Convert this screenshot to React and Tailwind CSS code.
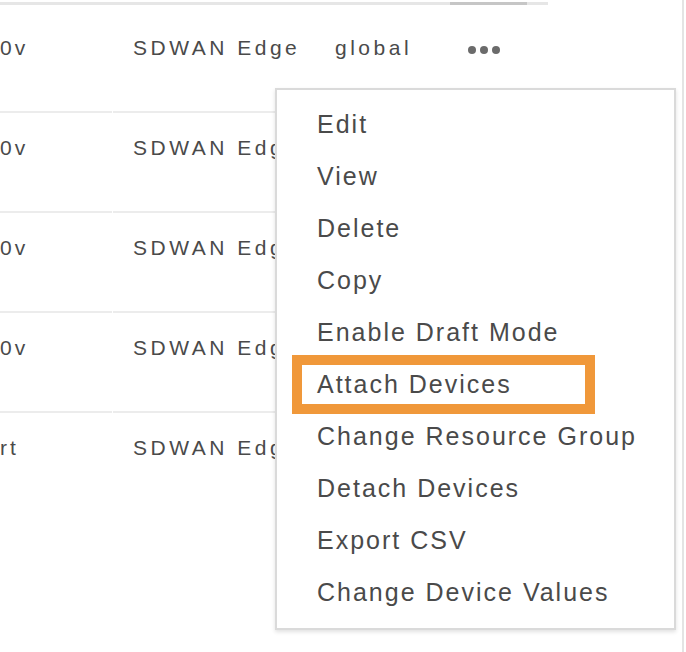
import React from "react";

const rows = [
  { c1: "0v", c2: "SDWAN Edge", c3: "global", dots: true },
  { c1: "0v", c2: "SDWAN Edge", c3: "", dots: false },
  { c1: "0v", c2: "SDWAN Edge", c3: "", dots: false },
  { c1: "0v", c2: "SDWAN Edge", c3: "", dots: false },
  { c1: "rt", c2: "SDWAN Edge", c3: "", dots: false, last: true },
];

const items = [
  "Edit",
  "View",
  "Delete",
  "Copy",
  "Enable Draft Mode",
  "Attach Devices",
  "Change Resource Group",
  "Detach Devices",
  "Export CSV",
  "Change Device Values",
];

export default function App() {
  return (
    <div
      className="relative flex w-[686px] h-[652px] overflow-hidden bg-white text-[#4a4a4a]"
      style={{ fontFamily: '"Liberation Sans", Arial, sans-serif' }}
    >
      <div className="w-[682px] h-full flex flex-col">
        <div className="mt-[2px] h-[3px] w-[548px] bg-[#e6e6e6] flex">
          <div className="ml-[450px] w-[77px] h-full bg-[#c6c6c6]" />
        </div>
        <div className="mt-[8px] flex flex-col">
          {rows.map((r, i) => (
            <div key={i} className="flex h-[100px]">
              <div
                className={`w-[112px] pt-[23px] text-[21px] leading-[24px] tracking-[3px] whitespace-nowrap ${
                  r.last ? "" : "border-b-2 border-[#ececec]"
                }`}
              >
                {r.c1}
              </div>
              <div
                className={`ml-[1px] w-[435px] flex pt-[23px] text-[21px] leading-[24px] tracking-[3.5px] whitespace-nowrap ${
                  r.last ? "" : "border-b-2 border-[#ececec]"
                }`}
              >
                <div className="w-[222px] pl-[20px]">{r.c2}</div>
                <div className="w-[133px]">{r.c3}</div>
                <div className="pt-[10px] flex gap-[4px]">
                  {r.dots && (
                    <>
                      <span className="block w-[8px] h-[8px] rounded-full bg-[#6b6b6b]" />
                      <span className="block w-[8px] h-[8px] rounded-full bg-[#6b6b6b]" />
                      <span className="block w-[8px] h-[8px] rounded-full bg-[#6b6b6b]" />
                    </>
                  )}
                </div>
              </div>
            </div>
          ))}
        </div>
      </div>
      <div className="w-[2px] h-full bg-[#e4e4e4]" />

      <div className="absolute left-[275px] top-[88px] w-[401px] h-[542px] bg-white border-2 border-[#dadada] shadow-[0_2px_4px_rgba(0,0,0,0.12)] pt-[9px] pl-[40px]">
        {items.map((t) => (
          <div
            key={t}
            className="h-[52px] flex items-center text-[25px] tracking-[2px] whitespace-nowrap text-[#4a4a4a]"
          >
            {t}
          </div>
        ))}
        <div className="absolute left-[15px] top-[265px] w-[303px] h-[59px] border-[10px] border-[#f0983a]" />
      </div>
    </div>
  );
}
